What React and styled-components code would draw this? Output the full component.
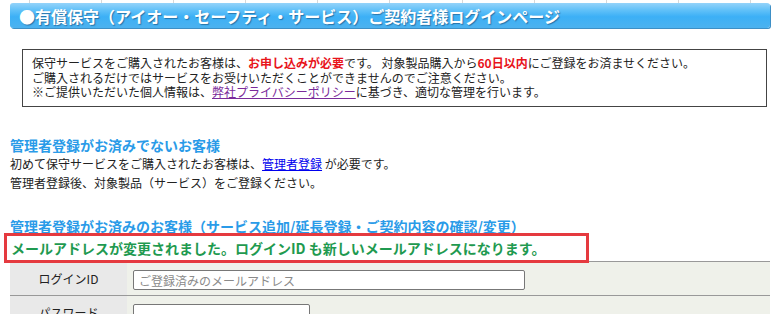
import React from "react"
import styled, { createGlobalStyle } from "styled-components"

const GlobalStyle = createGlobalStyle`
	body {
		margin: 0;
		background: #fff;
		font-family: "Noto Sans CJK JP", "Noto Sans", sans-serif;
		color: #222;
	}
`

const PageElement = styled.div`
	width: 784px;
	height: 314px;
	overflow: hidden;
`

const GridStripElement = styled.div`
	height: 3px;
	background-image: repeating-linear-gradient(
		to right,
		#d8d8d8 0,
		#d8d8d8 1px,
		transparent 1px,
		transparent 72.1px
	);
	background-position: 29px 0;
`

const TitleBarElement = styled.h1`
	margin: 0 14px 0 10px;
	height: 25px;
	padding-left: 9px;
	border-radius: 3px;
	background: linear-gradient(to bottom, #94d3fa 0%, #5fc0f8 30%, #3cb0f6 55%, #4cb2ef 100%);
	box-shadow: 1px 1px 0 #3d8fc6;
	color: #fff;
	font-size: 16px;
	font-weight: 700;
	line-height: 26px;
	text-shadow: 1px 1px 1px rgba(0, 40, 80, 0.45);
	white-space: nowrap;
`

const ContentElement = styled.div`
	padding: 0 14px 0 10px;
	display: flex;
	flex-direction: column;
`

const NoticeElement = styled.div`
	margin: 21px 3px 0 12px;
	padding: 6px 9px 6px 9px;
	border: 1px solid #444;
	font-size: 12px;
	line-height: 14.5px;
	color: #222;
`

const Strong = styled.span`
	color: ${props => props.color || "#e8141b"};
	font-weight: 700;
`

const TextLink = styled.a`
	color: ${props => (props.visited ? "#7a2a9a" : "#0000ee")};
	text-decoration: underline;
	cursor: pointer;
`

const SectionHeadingElement = styled.h2`
	margin: ${props => props.top}px 0 0;
	font-size: 14px;
	line-height: 16px;
	font-weight: 700;
	color: #2a9be8;
	white-space: nowrap;
`

const SectionTextElement = styled.p`
	margin: 1px 0 0;
	font-size: 12px;
	line-height: 19px;
`

const MessageElement = styled.div`
	margin: -1px 0 0 -6px;
	width: 575px;
	height: 24px;
	border: 3px solid #e53a3f;
	display: flex;
	align-items: center;
	padding-left: 4px;
	font-size: 14px;
	font-weight: 700;
	color: #1f9a50;
	white-space: nowrap;
	position: relative;
	z-index: 1;
`

const LoginTableElement = styled.div`
	margin-top: -2px;
	display: grid;
	grid-template-columns: 117px 1fr;
	border-top: 1px solid #999;
`

const LabelCell = styled.div`
	background: #e9e9e9;
	border-bottom: 1px solid #999;
	display: flex;
	justify-content: center;
	padding-top: 9px;
	height: 24px;
	font-size: 12px;
	line-height: 16px;
	color: #222;
`

const FieldCell = styled.div`
	background: #eff1ea;
	border-bottom: 1px solid #999;
	padding: 5px 0 0 6px;
	height: 28px;
`

const TextInput = styled.input`
	box-sizing: border-box;
	width: ${props => props.width}px;
	height: 20px;
	border: 1px solid #777;
	border-radius: 2px;
	background: #fff;
	padding: 0 5px;
	font-family: "Noto Sans CJK JP", "Noto Sans", sans-serif;
	font-size: 12px;
	color: #222;
	outline: none;

	&::placeholder {
		color: #8a8a8a;
	}
`

function App() {
	return (
		<PageElement>
			<GlobalStyle />
			<GridStripElement />
			<TitleBarElement>●有償保守（アイオー・セーフティ・サービス）ご契約者様ログインページ</TitleBarElement>
			<ContentElement>
				<NoticeElement>
					保守サービスをご購入されたお客様は、<Strong>お申し込みが必要</Strong>です。 対象製品購入から<Strong>60日以内</Strong>にご登録をお済ませください。
					<br />
					ご購入されるだけではサービスをお受けいただくことができませんのでご注意ください。
					<br />
					※ご提供いただいた個人情報は、<TextLink visited>弊社プライバシーポリシー</TextLink>に基づき、適切な管理を行います。
				</NoticeElement>

				<SectionHeadingElement top={30}>管理者登録がお済みでないお客様</SectionHeadingElement>
				<SectionTextElement>
					初めて保守サービスをご購入されたお客様は、<TextLink>管理者登録</TextLink> が必要です。
					<br />
					管理者登録後、対象製品（サービス）をご登録ください。
				</SectionTextElement>

				<SectionHeadingElement top={26}>管理者登録がお済みのお客様（サービス追加/延長登録・ご契約内容の確認/変更）</SectionHeadingElement>
				<MessageElement>メールアドレスが変更されました。ログインID も新しいメールアドレスになります。</MessageElement>

				<LoginTableElement>
					<LabelCell>ログインID</LabelCell>
					<FieldCell>
						<TextInput width={392} placeholder="ご登録済みのメールアドレス" />
					</FieldCell>
					<LabelCell>パスワード</LabelCell>
					<FieldCell>
						<TextInput width={177} type="password" />
					</FieldCell>
				</LoginTableElement>
			</ContentElement>
		</PageElement>
	)
}

export default App
